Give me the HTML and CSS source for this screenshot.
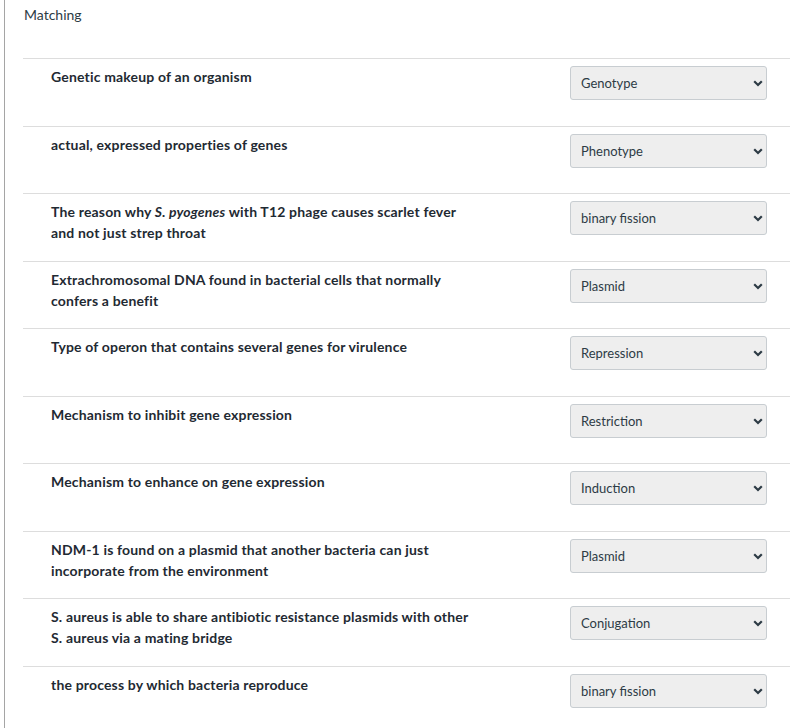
FILE: index.html
```html
<!DOCTYPE html>
<html lang="en">
<head>
<meta charset="utf-8">
<title>Matching</title>
<link rel="stylesheet" href="styles.css">
</head>
<body>
<div class="page">
  <div class="header">Matching</div>
  <div class="rows">
    <div class="row">
      <div class="question">Genetic makeup of an organism</div>
      <div class="select-wrap"><select class="answer"><option>Genotype</option></select><svg class="chev" width="10" height="7" viewBox="0 0 10 7"><path d="M1.2 1.2 L5 5 L8.8 1.2" fill="none" stroke="#2d3b45" stroke-width="2.2"/></svg></div>
    </div>
    <div class="row">
      <div class="question">actual, expressed properties of genes</div>
      <div class="select-wrap"><select class="answer"><option>Phenotype</option></select><svg class="chev" width="10" height="7" viewBox="0 0 10 7"><path d="M1.2 1.2 L5 5 L8.8 1.2" fill="none" stroke="#2d3b45" stroke-width="2.2"/></svg></div>
    </div>
    <div class="row">
      <div class="question">The reason why <em>S. pyogenes</em> with T12 phage causes scarlet fever and not just strep throat</div>
      <div class="select-wrap"><select class="answer"><option>binary fission</option></select><svg class="chev" width="10" height="7" viewBox="0 0 10 7"><path d="M1.2 1.2 L5 5 L8.8 1.2" fill="none" stroke="#2d3b45" stroke-width="2.2"/></svg></div>
    </div>
    <div class="row">
      <div class="question">Extrachromosomal DNA found in bacterial cells that normally confers a benefit</div>
      <div class="select-wrap"><select class="answer"><option>Plasmid</option></select><svg class="chev" width="10" height="7" viewBox="0 0 10 7"><path d="M1.2 1.2 L5 5 L8.8 1.2" fill="none" stroke="#2d3b45" stroke-width="2.2"/></svg></div>
    </div>
    <div class="row">
      <div class="question">Type of operon that contains several genes for virulence</div>
      <div class="select-wrap"><select class="answer"><option>Repression</option></select><svg class="chev" width="10" height="7" viewBox="0 0 10 7"><path d="M1.2 1.2 L5 5 L8.8 1.2" fill="none" stroke="#2d3b45" stroke-width="2.2"/></svg></div>
    </div>
    <div class="row">
      <div class="question">Mechanism to inhibit gene expression</div>
      <div class="select-wrap"><select class="answer"><option>Restriction</option></select><svg class="chev" width="10" height="7" viewBox="0 0 10 7"><path d="M1.2 1.2 L5 5 L8.8 1.2" fill="none" stroke="#2d3b45" stroke-width="2.2"/></svg></div>
    </div>
    <div class="row">
      <div class="question">Mechanism to enhance on gene expression</div>
      <div class="select-wrap"><select class="answer"><option>Induction</option></select><svg class="chev" width="10" height="7" viewBox="0 0 10 7"><path d="M1.2 1.2 L5 5 L8.8 1.2" fill="none" stroke="#2d3b45" stroke-width="2.2"/></svg></div>
    </div>
    <div class="row">
      <div class="question">NDM-1 is found on a plasmid that another bacteria can just incorporate from the environment</div>
      <div class="select-wrap"><select class="answer"><option>Plasmid</option></select><svg class="chev" width="10" height="7" viewBox="0 0 10 7"><path d="M1.2 1.2 L5 5 L8.8 1.2" fill="none" stroke="#2d3b45" stroke-width="2.2"/></svg></div>
    </div>
    <div class="row">
      <div class="question">S. aureus is able to share antibiotic resistance plasmids with other S. aureus via a mating bridge</div>
      <div class="select-wrap"><select class="answer"><option>Conjugation</option></select><svg class="chev" width="10" height="7" viewBox="0 0 10 7"><path d="M1.2 1.2 L5 5 L8.8 1.2" fill="none" stroke="#2d3b45" stroke-width="2.2"/></svg></div>
    </div>
    <div class="row">
      <div class="question">the process by which bacteria reproduce</div>
      <div class="select-wrap"><select class="answer"><option>binary fission</option></select><svg class="chev" width="10" height="7" viewBox="0 0 10 7"><path d="M1.2 1.2 L5 5 L8.8 1.2" fill="none" stroke="#2d3b45" stroke-width="2.2"/></svg></div>
    </div>
  </div>
</div>
</body>
</html>
```
FILE: styles.css
```css
html, body {
  margin: 0;
  padding: 0;
  background: #ffffff;
}
body {
  font-family: Lato, "Liberation Sans", sans-serif;
  color: #2d3b45;
  overflow: hidden;
}
.page {
  margin-left: 4px;
  border-left: 1px solid #a5a5a5;
  min-height: 728px;
  padding-left: 18px;
}
.header {
  padding: 5px 0 0 1px;
  height: 53px;
  font-size: 14px;
  line-height: 20px;
  color: #2d3b45;
}
.rows {
  display: flex;
  flex-direction: column;
}
.row {
  display: flex;
  justify-content: space-between;
  align-items: flex-start;
  border-top: 1px solid #dddddd;
  box-sizing: border-box;
  min-height: 67.5px;
  padding: 7px 23px 0 28px;
}
.question {
  width: 425px;
  font-size: 14px;
  line-height: 21px;
  font-weight: 700;
  letter-spacing: 0.17px;
  color: #1f2a33;
}
.question em {
  font-style: italic;
}
.select-wrap {
  position: relative;
  width: 197px;
  height: 34px;
}
.answer {
  appearance: none;
  -webkit-appearance: none;
  width: 197px;
  height: 34px;
  margin: 0;
  box-sizing: border-box;
  border: 1px solid #c8cdd1;
  border-radius: 3px;
  background: #eeeeee;
  padding: 0 28px 0 10px;
  font-family: Lato, "Liberation Sans", sans-serif;
  font-size: 13px;
  color: #2d3b45;
}
.chev {
  position: absolute;
  right: 4px;
  top: 14px;
  pointer-events: none;
}
```
